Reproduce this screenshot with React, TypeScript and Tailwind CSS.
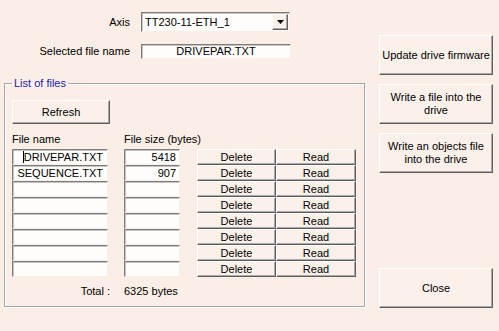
import React from 'react';

const files = [
  { name: 'DRIVEPAR.TXT', size: '5418', caret: true },
  { name: 'SEQUENCE.TXT', size: '907' },
  { name: '', size: '' },
  { name: '', size: '' },
  { name: '', size: '' },
  { name: '', size: '' },
  { name: '', size: '' },
  { name: '', size: '' },
];

const btn =
  'flex items-center justify-center text-center leading-[13px] bg-[#fbf0ea] border border-t-white border-l-white border-b-[#5f5f5f] border-r-[#5f5f5f] shadow-[inset_-1px_-1px_0_#a9a9a9]';
const sunken =
  'bg-[#fffdfc] border border-t-[#7c7c7c] border-l-[#7c7c7c] border-b-[#fbeee6] border-r-[#fbeee6] shadow-[inset_1px_1px_0_#c4c4c4]';

const App: React.FC = () => {
  return (
    <div className="w-[499px] h-[331px] overflow-hidden bg-[#fbeee6] flex text-[11px] leading-[13px] text-black font-['Liberation_Sans',Arial,sans-serif]">
      {/* left side */}
      <div className="w-[365px] pl-[4px] pt-[12px] flex flex-col">
        <div className="flex items-center">
          <div className="w-[126px] text-right">Axis</div>
          <div className={`ml-[11px] w-[149px] h-[20px] flex items-center justify-between pl-[3px] pr-[1px] ${sunken}`}>
            <span>TT230-11-ETH_1</span>
            <div className={`w-[16px] h-[16px] ${btn}`}>
              <svg width="7" height="4" viewBox="0 0 7 4">
                <path d="M0 0h7L3.5 4z" fill="#000" />
              </svg>
            </div>
          </div>
        </div>

        <div className="flex items-center mt-[12px]">
          <div className="w-[126px] text-right">Selected file name</div>
          <div className={`ml-[11px] w-[150px] h-[15px] flex items-center justify-center ${sunken}`}>
            DRIVEPAR.TXT
          </div>
        </div>

        <fieldset className="mt-[18px] w-[361px] border border-[#a6a6a6] shadow-[inset_1px_1px_0_#fff,1px_1px_0_#fff] pl-[7px] pb-[8px]">
          <legend className="px-[2px] text-[#1c1ca8]">List of files</legend>

          <div className={`mt-[10px] w-[98px] h-[24px] ${btn}`}>Refresh</div>

          <div className="flex mt-[9px]">
            <div className="w-[112px]">File name</div>
            <div>File size (bytes)</div>
          </div>

          <div className="mt-[3px] flex flex-col">
            {files.map((f, i) => (
              <div key={i} className="flex h-[16px]">
                <div className={`w-[96px] flex items-center justify-end pr-[4px] ${sunken}`}>
                  {f.caret && <span className="inline-block w-px h-[12px] bg-black" />}
                  {f.name}
                </div>
                <div className={`ml-[16px] w-[56px] flex items-center justify-end pr-[3px] ${sunken}`}>
                  {f.size}
                </div>
                <div className={`ml-[17px] w-[79px] ${btn}`}>Delete</div>
                <div className={`w-[80px] ${btn}`}>Read</div>
              </div>
            ))}
          </div>

          <div className="flex mt-[8px]">
            <div className="w-[98px] text-right">Total :</div>
            <div className="ml-[14px]">6325 bytes</div>
          </div>
        </fieldset>
      </div>

      {/* right side buttons */}
      <div className="ml-[14px] w-[114px] pt-[35px] flex flex-col">
        <div className={`h-[40px] ${btn}`}>Update drive firmware</div>
        <div className={`mt-[9px] h-[40px] px-[8px] ${btn}`}>Write a file into the drive</div>
        <div className={`mt-[9px] h-[40px] px-[4px] ${btn}`}>Write an objects file into the drive</div>
        <div className={`mt-[95px] h-[40px] ${btn}`}>Close</div>
      </div>
    </div>
  );
};

export default App;
